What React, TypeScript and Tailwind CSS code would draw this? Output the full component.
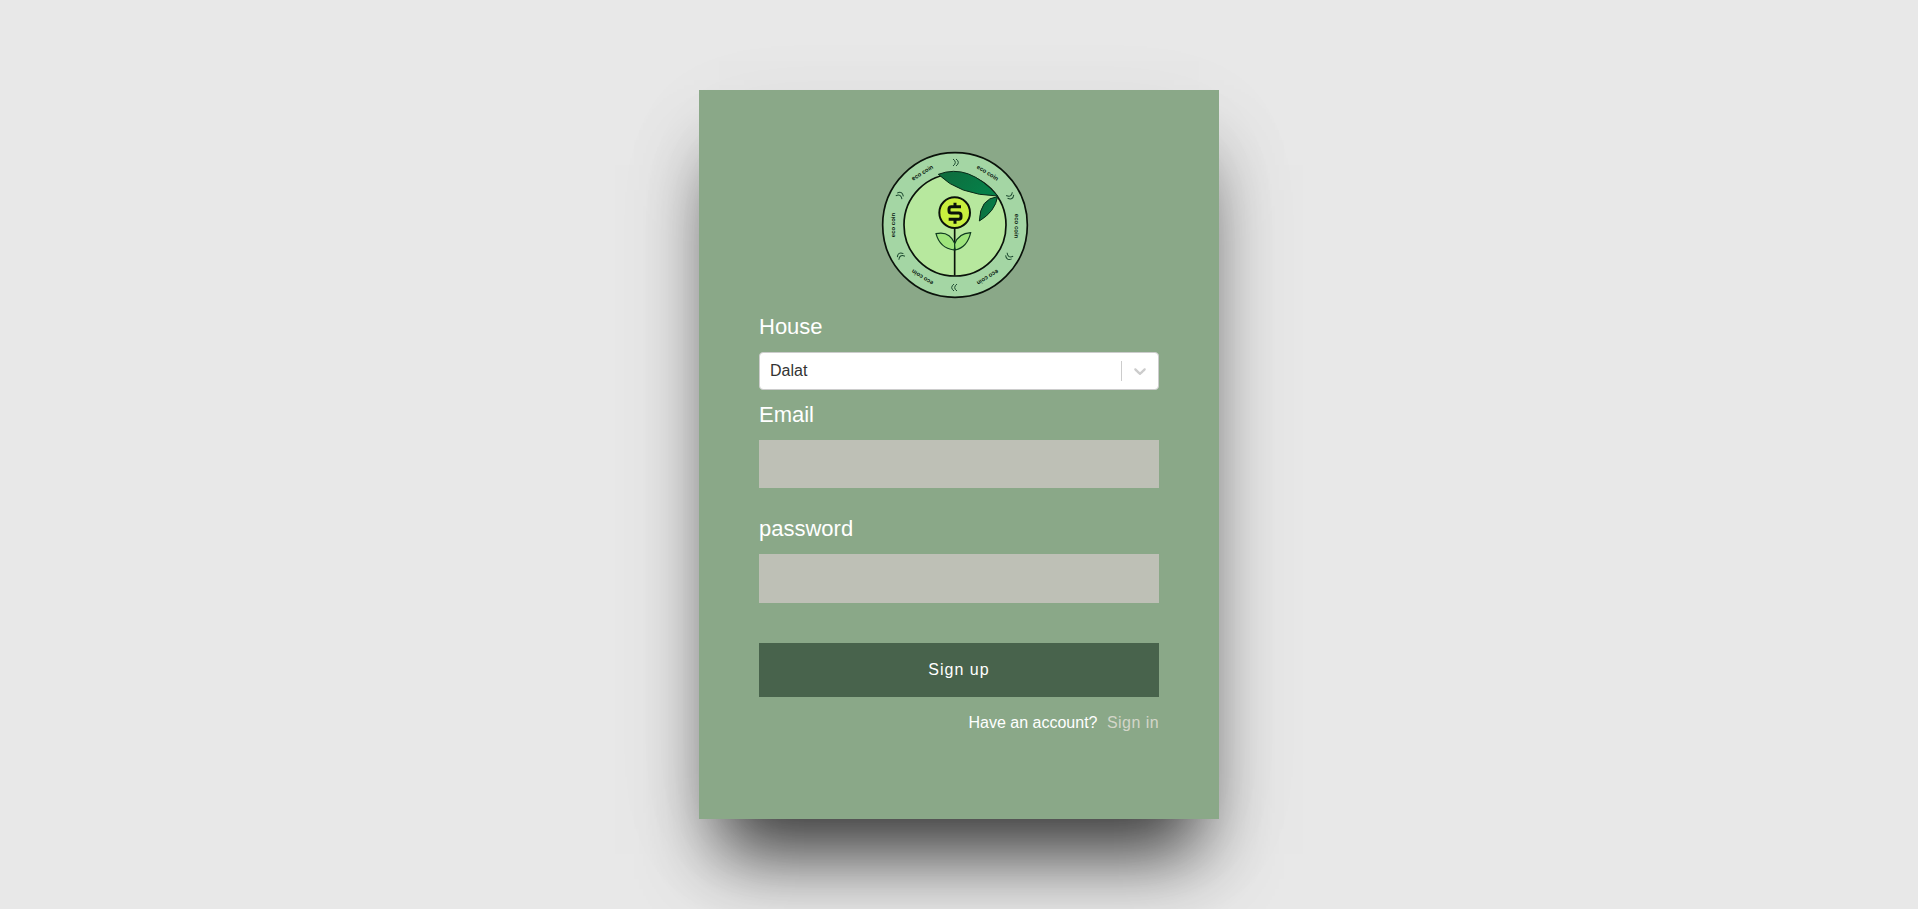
export default function App() {
  const cx = 285, cy = 255;
  return (
    <div className="min-h-[909px] bg-[#e8e8e8] flex justify-center items-start pt-[90px] font-['Liberation_Sans',Arial,sans-serif]">
      <div className="w-[520px] h-[729px] bg-[#8aa888] px-[60px] pt-[60px] shadow-[0_55px_70px_-20px_rgba(0,0,0,0.75),0_30px_100px_rgba(0,0,0,0.05)]">
        <div className="flex justify-center pr-2">
          <svg width="150" height="150" viewBox="60 30 450 450">
            <defs>
              <linearGradient id="lf" x1="0" y1="0" x2="1" y2="0.4">
                <stop offset="0" stopColor="#0f6a3c" />
                <stop offset="1" stopColor="#058049" />
              </linearGradient>
            </defs>
            <circle cx={cx} cy={cy} r="217" fill="#a4d6a4" stroke="#0a120a" strokeWidth="5" />
            <circle cx={cx} cy={cy} r="153" fill="#b7e89e" stroke="#0a120a" strokeWidth="5" />
            {[-32, 32, 91, 148, 212, 270].map((a) => (
              <text key={a} transform={`rotate(${a} ${cx} ${cy})`} x={cx} y={cy - 179} textAnchor="middle" fontSize="18" fontWeight="700" fill="#0a1a10" fontFamily="Liberation Sans, Arial, sans-serif">
                eco coin
              </text>
            ))}
            {[0, 62, 120, 180, 240, 298].map((a) => (
              <path key={a} transform={`rotate(${a} ${cx} ${cy})`} d="M279 57 Q293 67 279 78 M288 57 Q302 67 288 78" fill="none" stroke="#1d4a30" strokeWidth="3" />
            ))}
            <path d="M284 265 V407" stroke="#0a120a" strokeWidth="5" />
            <path d="M228 281 Q268 272 284 310 Q286 320 282 330 Q240 325 228 281Z" fill="#9fe57c" stroke="#0f3a20" strokeWidth="3.5" />
            <path d="M332 278 Q295 280 284 312 Q284 322 286 330 Q322 322 332 278Z" fill="#9fe57c" stroke="#0f3a20" strokeWidth="3.5" />
            <circle cx="284" cy="218" r="46" fill="#c9f03e" stroke="#0a120a" strokeWidth="6" />
            <path d="M303 200 H274 Q267 200 267 207 V212 Q267 219 274 219 H296 Q303 219 303 226 V231 Q303 238 296 238 H266" fill="none" stroke="#0a120a" strokeWidth="9" />
            <path d="M285 188 V200 M285 238 V251" fill="none" stroke="#0a120a" strokeWidth="9" />
            <path d="M235 103 Q326 68 413 168 Q296 165 235 103Z" fill="url(#lf)" stroke="#0a2a18" strokeWidth="3" />
            <path d="M413 170 Q360 175 358 243 Q405 215 413 170Z" fill="url(#lf)" stroke="#0a2a18" strokeWidth="3" />
          </svg>
        </div>
        <form className="mt-[14px]">
          <label className="block text-[22px] leading-[25px] text-white mb-[13px]">House</label>
          <div className="h-[38px] bg-white border border-[#cccccc] rounded flex items-center">
            <div className="flex-1 pl-[10px] text-base text-[#333333]">Dalat</div>
            <span className="w-px h-5 bg-[#cccccc]" />
            <div className="p-2 text-[#cccccc]">
              <svg width="20" height="20" viewBox="0 0 20 20" fill="currentColor">
                <path d="M4.516 7.548c0.436-0.446 1.043-0.481 1.576 0l3.908 3.747 3.908-3.747c0.533-0.481 1.141-0.446 1.574 0 0.436 0.445 0.408 1.197 0 1.615-0.406 0.418-4.695 4.502-4.695 4.502-0.217 0.223-0.502 0.335-0.787 0.335s-0.57-0.112-0.789-0.335c0 0-4.287-4.084-4.695-4.502s-0.436-1.17 0-1.615z" />
              </svg>
            </div>
          </div>
          <label className="block text-[22px] leading-[25px] text-white mt-[12px] mb-[13px]">Email</label>
          <input className="block w-full h-[48px] bg-[#bec0b6] outline-none" type="email" />
          <label className="block text-[22px] leading-[25px] text-white mt-[28px] mb-[13px]">password</label>
          <input className="block w-full h-[49px] bg-[#bec0b6] outline-none" type="password" />
          <button type="button" className="block w-full h-[54px] mt-[40px] bg-[#48634c] text-white text-base tracking-[1px]">Sign up</button>
          <p className="mt-[14px] text-right text-base leading-[24px] text-white">
            Have an account? <a className="ml-[5px] text-[#d3d6c9] tracking-[0.45px]">Sign in</a>
          </p>
        </form>
      </div>
    </div>
  );
}
